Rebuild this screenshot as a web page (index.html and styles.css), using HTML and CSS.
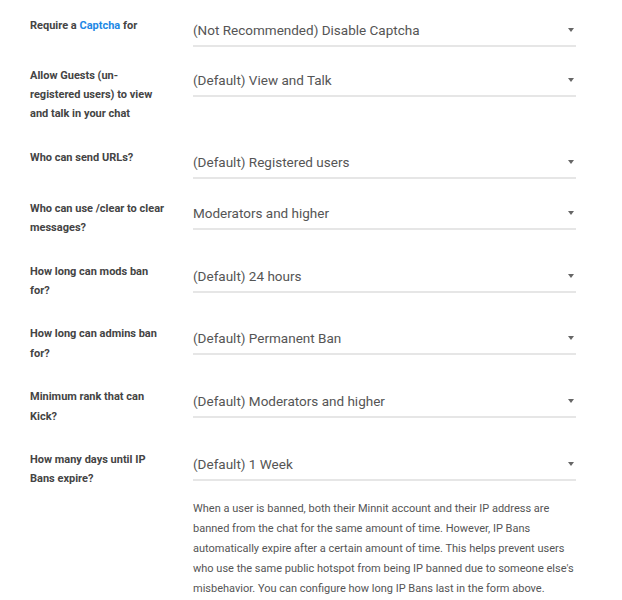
FILE: index.html
```html
<!DOCTYPE html>
<html>
<head>
<meta charset="utf-8">
<link rel="stylesheet" href="styles.css">
</head>
<body>
<div class="form">
  <div class="row">
    <div class="label">Require a <a class="link" href="#">Captcha</a> for</div>
    <div class="control"><div class="field"><span class="value">(Not Recommended) Disable Captcha</span><span class="arrow"></span></div></div>
  </div>
  <div class="row">
    <div class="label">Allow Guests (un-registered users) to view and talk in your chat</div>
    <div class="control"><div class="field"><span class="value">(Default) View and Talk</span><span class="arrow"></span></div></div>
  </div>
  <div class="row">
    <div class="label">Who can send URLs?</div>
    <div class="control"><div class="field"><span class="value">(Default) Registered users</span><span class="arrow"></span></div></div>
  </div>
  <div class="row">
    <div class="label">Who can use /clear to clear messages?</div>
    <div class="control"><div class="field"><span class="value">Moderators and higher</span><span class="arrow"></span></div></div>
  </div>
  <div class="row">
    <div class="label">How long can mods ban for?</div>
    <div class="control"><div class="field"><span class="value">(Default) 24 hours</span><span class="arrow"></span></div></div>
  </div>
  <div class="row">
    <div class="label">How long can admins ban for?</div>
    <div class="control"><div class="field"><span class="value">(Default) Permanent Ban</span><span class="arrow"></span></div></div>
  </div>
  <div class="row">
    <div class="label">Minimum rank that can Kick?</div>
    <div class="control"><div class="field"><span class="value">(Default) Moderators and higher</span><span class="arrow"></span></div></div>
  </div>
  <div class="row">
    <div class="label">How many days until IP Bans expire?</div>
    <div class="control">
      <div class="field"><span class="value">(Default) 1 Week</span><span class="arrow"></span></div>
      <p class="note">When a user is banned, both their Minnit account and their IP address are banned from the chat for the same amount of time. However, IP Bans automatically expire after a certain amount of time. This helps prevent users who use the same public hotspot from being IP banned due to someone else's misbehavior. You can configure how long IP Bans last in the form above.</p>
    </div>
  </div>
</div>
</body>
</html>
```
FILE: styles.css
```css
html, body {
  margin: 0;
  padding: 0;
  background: #ffffff;
}
body {
  font-family: Roboto, "Liberation Sans", sans-serif;
  color: #555;
}
.form {
  padding: 15.5px 0 0 30px;
}
.row {
  display: flex;
  align-items: flex-start;
  margin-bottom: 19.5px;
}
.label {
  width: 136px;
  margin-right: 27px;
  padding-bottom: 5px;
  font-size: 11px;
  line-height: 19.2px;
  font-weight: 700;
  color: #444;
}
.link {
  color: #1e88e5;
  text-decoration: none;
}
.control {
  width: 383px;
}
.field {
  display: flex;
  align-items: center;
  justify-content: space-between;
  padding: 4px 0 5px;
  border-bottom: 2px solid #e6e6e6;
  height: 20px;
}
.value {
  font-size: 13.5px;
  line-height: 20px;
  color: #555;
}
.arrow {
  width: 0;
  height: 0;
  margin-right: 2px;
  border-left: 3.5px solid transparent;
  border-right: 3.5px solid transparent;
  border-top: 4px solid #666;
}
.note {
  margin: 17.5px 0 0;
  font-size: 11px;
  line-height: 20px;
  color: #555;
}
```
